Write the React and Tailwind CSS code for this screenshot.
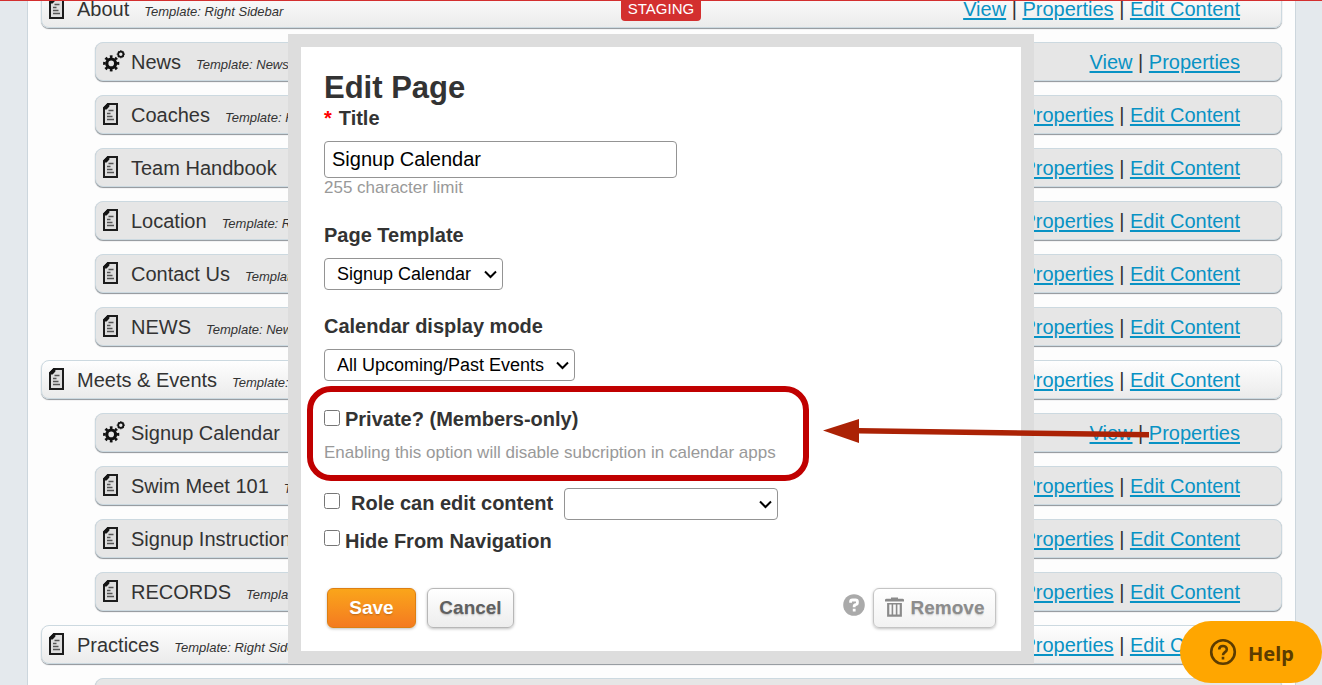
import { useState } from 'react';

const PAGES = [
  { name: 'About', template: 'Right Sidebar', level: 0 },
  { name: 'News', template: 'News', level: 1, dynamic: true },
  { name: 'Coaches', template: 'Right Sidebar', level: 1 },
  { name: 'Team Handbook', template: 'Right Sidebar', level: 1 },
  { name: 'Location', template: 'Right Sidebar', level: 1 },
  { name: 'Contact Us', template: 'Right Sidebar', level: 1 },
  { name: 'NEWS', template: 'News', level: 1 },
  { name: 'Meets & Events', template: 'Right Sidebar', level: 0 },
  { name: 'Signup Calendar', template: 'Signup Calendar', level: 1, dynamic: true },
  { name: 'Swim Meet 101', template: 'Right Sidebar', level: 1 },
  { name: 'Signup Instructions', template: 'Right Sidebar', level: 1 },
  { name: 'RECORDS', template: 'Right Sidebar', level: 1 },
  { name: 'Practices', template: 'Right Sidebar', level: 0 },
  { name: 'Schedule', template: 'Right Sidebar', level: 1 },
];

const DocIcon = () => (
  <svg width="15" height="22" viewBox="0 0 15 22" className="mb-0.5" aria-hidden="true">
    <path d="M5 1H14V20.9H1V5.5Z" fill="#dedede" stroke="#1c1c1c" strokeWidth="2" />
    <path d="M0 6.4V4.6L4.6 0H6.4V3.6L3.6 6.4Z" fill="#141414" />
    <path d="M5.5 7.5H10.5M4 10.5H7.5M4 13.5H9.5M4 16.5H11" stroke="#555" strokeWidth="1.4" />
  </svg>
);

const GearsIcon = () => (
  <svg width="22" height="22" viewBox="0 0 22 22" fill="none" stroke="#111" className="mb-px" aria-hidden="true">
    <circle cx="8.2" cy="13.4" r="4.4" strokeWidth="3.2" />
    <circle cx="8.2" cy="13.4" r="6.8" strokeWidth="2.6" pathLength="16" strokeDasharray="1 1" strokeDashoffset="0.5" />
    <circle cx="17.8" cy="4.2" r="2.6" strokeWidth="1.8" />
    <circle cx="17.8" cy="4.2" r="3.6" strokeWidth="1" pathLength="16" strokeDasharray="1 1" strokeDashoffset="0.5" />
  </svg>
);

const TrashIcon = () => (
  <svg width="19" height="20" viewBox="0 0 19 20" fill="none" stroke="#8a8a8a" className="mb-0.5" aria-hidden="true">
    <path d="M0 4.6V3Q0 1.8 1.6 1.8H6V0.4H13V1.8H17.4Q19 1.8 19 3V4.6Z" fill="#8a8a8a" stroke="none" />
    <path d="M3.2 6V18.6H15.8V6" strokeWidth="2.2" />
    <path d="M3 6.8H16M7.4 7V18M11.6 7V18" strokeWidth="1.6" />
  </svg>
);

const PageLink = ({ children }) => (
  <a href="#" className="text-[#0892c4] underline decoration-2 underline-offset-2">{children}</a>
);

const PageRow = ({ page }) => (
  <li
    className={
      'flex h-[39px] items-center rounded-lg border border-[#ccd9e0] pr-[41px] pl-[7px] shadow-[0_1px_1px_#8d9398] ' +
      (page.level === 0 ? 'bg-linear-to-b from-[#fefefe] to-[#ebebeb]' : 'ml-[54px] bg-[#e6e6e6]')
    }
  >
    <span className="w-7 shrink-0">{page.dynamic ? <GearsIcon /> : <DocIcon />}</span>
    <div className="flex flex-1 items-baseline gap-[15px] whitespace-nowrap">
      <span>{page.name}</span>
      <em className="text-[13px]">Template: {page.template}</em>
    </div>
    <div className="whitespace-nowrap">
      <PageLink>View</PageLink> | <PageLink>Properties</PageLink>
      {!page.dynamic && <> | <PageLink>Edit Content</PageLink></>}
    </div>
  </li>
);

const Select = ({ className, children, ...props }) => (
  <div className={'relative h-8 ' + className}>
    <select {...props} className="size-full appearance-none rounded border border-[#949494] bg-white pr-6 pl-3 text-lg leading-6 text-black">
      {children}
    </select>
    <svg className="pointer-events-none absolute top-3 right-1.5" width="13" height="9" viewBox="0 0 13 9" fill="none" aria-hidden="true">
      <path d="M1 1.5 6.5 7 12 1.5" stroke="#000" strokeWidth="2" />
    </svg>
  </div>
);

const checkClass = 'size-4 shrink-0';
const buttonClass = 'h-10 rounded-md border text-[19px] leading-6 font-bold shadow-[0_1px_3px_rgba(0,0,0,0.25)] text-shadow-sm';

const EditPageDialog = () => {
  const [title, setTitle] = useState('Signup Calendar');

  return (
    <form
      role="dialog"
      aria-labelledby="dialog-title"
      onSubmit={(e) => e.preventDefault()}
      className="w-full max-w-[746px] border-[13px] border-[#ddd] bg-white px-[23px] pt-[23px] pb-[23px]"
    >
      <h1 id="dialog-title" className="text-[31px] leading-9 font-bold">Edit Page</h1>
      <label htmlFor="title" className="flex gap-[7px] leading-6 font-bold">
        <span className="text-[#f00]">*</span>Title
      </label>
      <input
        id="title"
        value={title}
        onChange={(e) => setTitle(e.target.value)}
        className="mt-[11px] block h-[37px] w-[353px] rounded border border-[#949494] px-[7px] text-black"
      />
      <p className="text-[17px] leading-5 text-[#999]">255 character limit</p>

      <label htmlFor="template" className="mt-[25px] block leading-6 font-bold">Page Template</label>
      <Select id="template" className="mt-[11px] w-[179px]">
        <option>Signup Calendar</option>
      </Select>

      <label htmlFor="mode" className="mt-6 block leading-6 font-bold">Calendar display mode</label>
      <Select id="mode" className="mt-[11px] w-[251px]">
        <option>All Upcoming/Past Events</option>
      </Select>

      <div className="relative mt-[26px] w-[466px]">
        <div className="flex gap-[5px]">
          <input id="private" type="checkbox" className={checkClass + ' mt-[3px]'} />
          <label htmlFor="private" className="leading-6 font-bold">Private? (Members-only)</label>
        </div>
        <p className="mt-3 text-[17px] leading-5 whitespace-nowrap text-[#999]">
          Enabling this option will disable subcription in calendar apps
        </p>
        <div className="pointer-events-none absolute -top-[21px] -right-[19px] -bottom-[18px] -left-[17px] rounded-3xl border-[6px] border-[#c00000]" />
        <svg className="pointer-events-none absolute top-3 left-[499px]" width="326" height="24" viewBox="0 0 326 24" aria-hidden="true">
          <path d="M0 11.6 36 0V9L326 13V18.5L36 14.6V24Z" fill="#ab2205" />
        </svg>
      </div>

      <div className="mt-[25px] flex">
        <input id="role" type="checkbox" className={checkClass + ' mt-[5px]'} />
        <label htmlFor="role" className="ml-[11px] w-[208px] leading-[30px] font-bold">Role can edit content</label>
        <Select aria-label="Role" className="ml-[5px] w-[214px]">
          <option></option>
        </Select>
      </div>
      <div className="mt-[9px] flex gap-[5px]">
        <input id="hide" type="checkbox" className={checkClass + ' mt-px'} />
        <label htmlFor="hide" className="leading-6 font-bold">Hide From Navigation</label>
      </div>

      <div className="mt-[35px] flex items-center pr-0.5 pl-[3px]">
        <button type="submit" className={buttonClass + ' w-[89px] border-[#dd7f12] bg-linear-to-b from-[#faa51a] to-[#f47a20] text-white'}>
          Save
        </button>
        <button type="button" className={buttonClass + ' ml-[11px] w-[87px] border-[#b7b7b7] bg-linear-to-b from-white to-[#ededed] text-[#606060]'}>
          Cancel
        </button>
        <button type="button" aria-label="Remove help" className="mr-2 mb-1.5 ml-auto">
          <svg width="22" height="22" viewBox="0 0 22 22" fill="none" aria-hidden="true">
            <circle cx="11" cy="11" r="10.8" fill="#aaa" />
            <path d="M7.6 8.8V7.6Q7.6 6 9.4 6H12.6Q14.4 6 14.4 7.6V8.8Q14.4 10.4 12.8 10.6Q11.2 10.8 11.2 12.2V13.2M11.2 14.8V17.6" stroke="#fff" strokeWidth="2.8" />
          </svg>
        </button>
        <button type="button" className={buttonClass + ' flex w-[123px] items-center justify-center gap-[7px] border-[#c4c4c4] bg-linear-to-b from-white to-[#f2f2f2] text-[#8c8c8c]'}>
          <TrashIcon />
          Remove
        </button>
      </div>
    </form>
  );
};

const App = () => {
  return (
    <div className="h-screen overflow-hidden bg-[#e4e9ed] font-['Liberation_Sans',Arial,sans-serif] text-xl text-[#333]">
      <main className="mr-[26px] ml-[27px] min-h-full border-x border-[#ccd6dd] bg-[#fdfdfd] px-[13px]">
        <ul className="-mt-[11px] flex flex-col gap-[14px]">
          {PAGES.map((page) => (
            <PageRow key={page.name} page={page} />
          ))}
        </ul>
      </main>

      <div className="fixed inset-x-0 top-0 flex justify-center border-t border-[#d32f2f]">
        <span className="-mt-px h-[21px] rounded-b bg-[#d32f2f] px-[7px] text-[15px] leading-[18px] text-white">STAGING</span>
      </div>

      <div className="fixed inset-x-0 top-0 flex justify-center pt-[34px]">
        <EditPageDialog />
      </div>

      <button
        type="button"
        className="fixed right-0 bottom-0.5 flex h-[62px] w-[142px] items-center gap-[11px] rounded-full bg-[#ffa600] pt-1 pl-[29px] font-['Noto_Sans',sans-serif] font-bold text-[#5c3c00]"
      >
        <svg width="28" height="28" viewBox="0 0 28 28" fill="none" stroke="#5c3c00" strokeWidth="2.6" className="mb-1" aria-hidden="true">
          <circle cx="14" cy="14" r="11.8" />
          <path d="M10.2 11.6C10.2 6.8 17.8 6.8 17.8 11.4C17.8 14.2 14 14 14 17.2M14 18.8V21.4" />
        </svg>
        Help
      </button>
    </div>
  );
};

export default App;
